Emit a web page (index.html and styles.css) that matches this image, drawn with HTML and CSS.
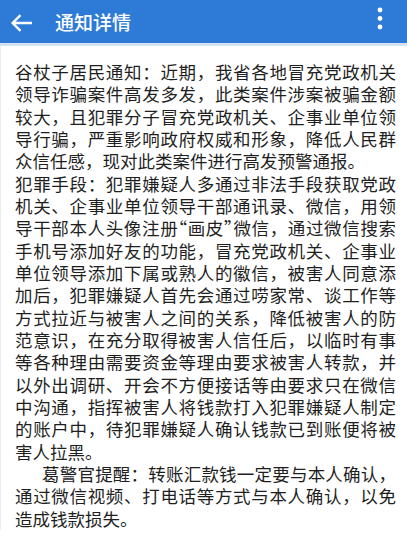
FILE: index.html
```html
<!DOCTYPE html>
<html lang="zh-CN">
<head>
<meta charset="utf-8">
<title>通知详情</title>
<link rel="stylesheet" href="styles.css">
</head>
<body>
<header class="appbar">
  <svg class="back" width="22" height="18" viewBox="0 0 22 18" aria-hidden="true">
    <path d="M1.5 9H21M9.5 1.2L1.6 9l7.9 7.8" fill="none" stroke="#fff" stroke-width="2.4" stroke-linecap="butt" stroke-linejoin="miter"/>
  </svg>
  <h1 class="title">通知详情</h1>
  <svg class="more" width="8" height="24" viewBox="0 0 8 24" aria-hidden="true">
    <circle cx="4" cy="3" r="2.4" fill="#fff"/>
    <circle cx="4" cy="11.5" r="2.4" fill="#fff"/>
    <circle cx="4" cy="20" r="2.4" fill="#fff"/>
  </svg>
</header>
<main class="content">
  <p class="para">谷杖子居民通知：近期，我省各地冒充党政机关领导诈骗案件高发多发，此类案件涉案被骗金额较大，且犯罪分子冒充党政机关、企事业单位领导行骗，严重影响政府权威和形象，降低人民群众信任感，现对此类案件进行高发预警通报。</p>
  <p class="para">犯罪手段：犯罪嫌疑人多通过非法手段获取党政机关、企事业单位领导干部通讯录、微信，用领导干部本人头像注册<span class="quote">“画皮”</span>微信，通过微信搜索手机号添加好友的功能，冒充党政机关、企事业单位领导添加下属或熟人的徽信，被害人同意添加后，犯罪嫌疑人首先会通过唠家常、谈工作等方式拉近与被害人之间的关系，降低被害人的防范意识，在充分取得被害人信任后，以临时有事等各种理由需要资金等理由要求被害人转款，并以外出调研、开会不方便接话等由要求只在微信中沟通，指挥被害人将钱款打入犯罪嫌疑人制定的账户中，待犯罪嫌疑人确认钱款已到账便将被害人拉黑。</p>
  <p class="para para-indent">葛警官提醒：转账汇款钱一定要与本人确认，通过微信视频、打电话等方式与本人确认，以免造成钱款损失。</p>
</main>
</body>
</html>
```
FILE: styles.css
```css
html, body {
  margin: 0;
  padding: 0;
  background: #ffffff;
}

body {
  width: 407px;
  height: 537px;
  overflow: hidden;
  font-family: "Noto Sans CJK SC", "Noto Sans", sans-serif;
}

.appbar {
  height: 43px;
  background: #2e7bd7;
  border-bottom: 3px solid #d3e2f3;
  display: flex;
  align-items: center;
  padding-left: 11px;
  padding-right: 23px;
  box-sizing: content-box;
}

.back {
  display: block;
  flex: none;
  margin-top: 2px;
}

.title {
  margin: 0 0 0 22px;
  font-size: 19px;
  font-weight: 500;
  color: #ffffff;
  line-height: 1;
  flex: 1;
}

.more {
  display: block;
  flex: none;
  margin-top: -5px;
}

.content {
  padding: 15px 11px 0 15px;
  border-left: 1px solid #ececec;
  margin-left: 0;
}

.para {
  margin: 0;
  margin-left: -1px;
  font-size: 17.5px;
  line-height: 22.33px;
  color: #1f1f1f;
  text-align: justify;
}

.para-indent {
  text-indent: 27px;
}

.quote {
  font-feature-settings: "halt";
}
```
